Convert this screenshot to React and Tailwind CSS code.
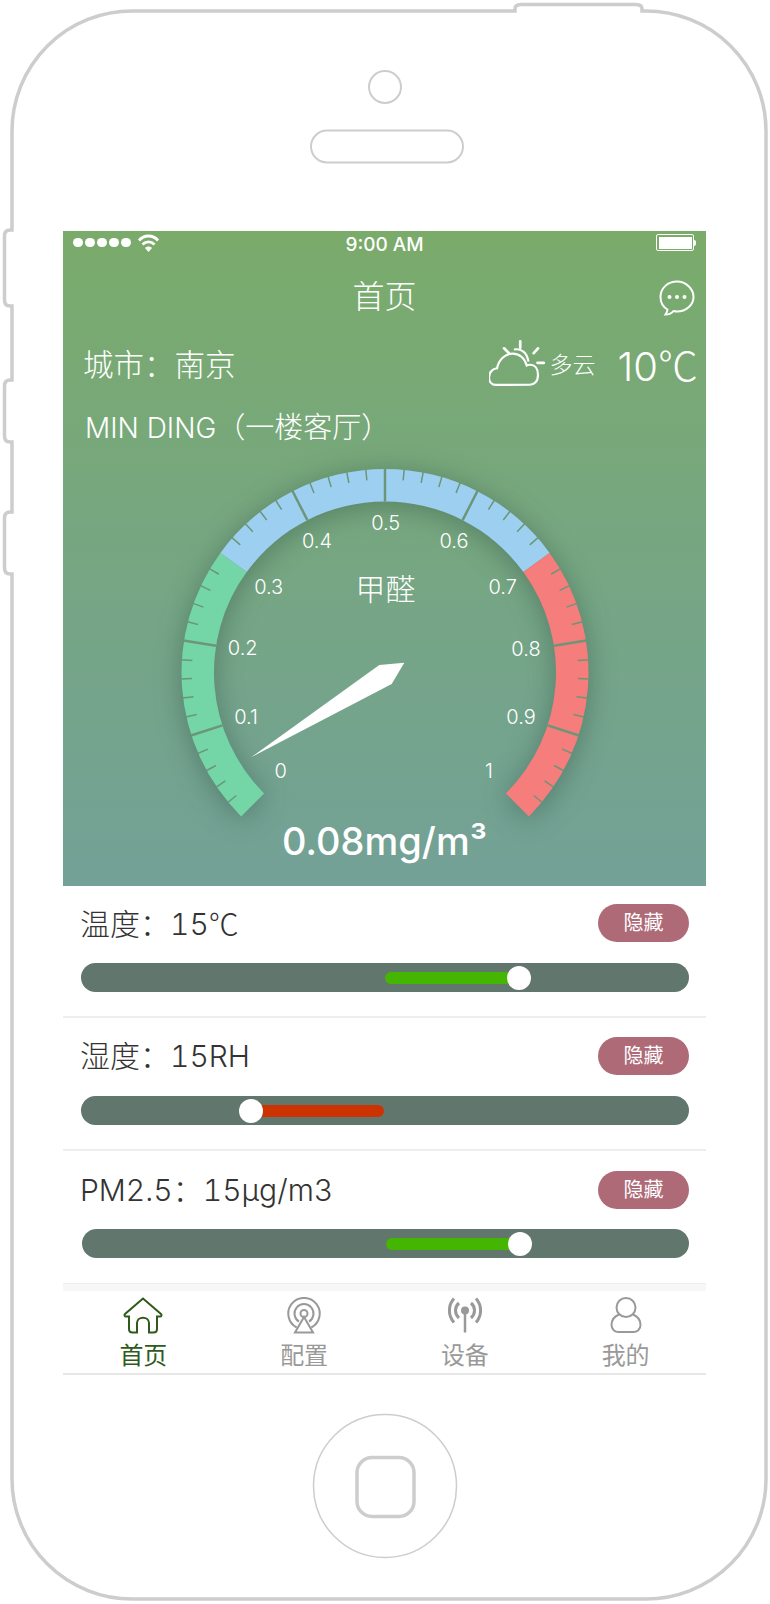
import React from 'react';

const CX = 322;
const CY = 224.5;

const polar = (r, v) => {
    // v goes 0..1 over a 270 degree sweep, starting bottom left
    const a = ((-135 + v * 270) * Math.PI) / 180;
    return [CX + r * Math.sin(a), CY - r * Math.cos(a)];
};

const sector = (from, to) => {
    const R = 203.5;
    const r = 171;
    const [x1, y1] = polar(R, from);
    const [x2, y2] = polar(R, to);
    const [x3, y3] = polar(r, to);
    const [x4, y4] = polar(r, from);
    return `M${x1} ${y1}A${R} ${R} 0 0 1 ${x2} ${y2}L${x3} ${y3}A${r} ${r} 0 0 0 ${x4} ${y4}Z`;
};

const labels = [
    ['0', 217.7, 322.7],
    ['0.1', 183, 268.7],
    ['0.2', 179.7, 199.7],
    ['0.3', 205.7, 138.7],
    ['0.4', 254, 93],
    ['0.5', 322.7, 75],
    ['0.6', 391, 93],
    ['0.7', 439.7, 138.7],
    ['0.8', 463, 200.5],
    ['0.9', 458, 268.7],
    ['1', 426, 322.7],
];

const ticks = Array.from({ length: 51 }, (_, i) => i);

const Gauge = () => (
    <svg className="block overflow-visible" width="643" height="375" viewBox="0 0 643 375">
        <g className="drop-shadow-[0_4px_14px_rgba(30,60,50,0.38)]">
            <path d={sector(0, 0.3)} fill="#74d5a6" />
            <path d={sector(0.3, 0.7)} fill="#9dcff0" />
            <path d={sector(0.7, 1)} fill="#f57d7b" />
        </g>
        {ticks.map((i) => {
            const v = i / 50;
            const major = i % 5 === 0;
            if (i === 0 || i === 50) return null;
            if (major && (i === 15 || i === 35)) return null;
            const [x1, y1] = polar(204, v);
            const [x2, y2] = polar(major ? 171 : 193, v);
            return (
                <line
                    key={i}
                    x1={x1}
                    y1={y1}
                    x2={x2}
                    y2={y2}
                    stroke="#6c9678"
                    strokeWidth={major ? 2.5 : 1.5}
                />
            );
        })}
        {labels.map(([t, x, y]) => (
            <text key={t} x={x} y={y} textAnchor="middle" dominantBaseline="central" fill="#fff" className="text-[20px] font-light">
                {t}
            </text>
        ))}
        <text x="322.500" y="141" textAnchor="middle" dominantBaseline="central" fill="#fff" className="text-[30px] font-light">
            甲醛
        </text>
        <path d="M188 309.3L316.3 217L341.3 214.7L328.7 236Z" fill="#fff" />
    </svg>
);

const Slider = ({ children, className }) => (
    <div className={`flex h-[29px] items-center rounded-full bg-[#61766d] ${className}`}>{children}</div>
);

const HideBtn = () => (
    <div className="flex h-[38px] w-[91px] items-center justify-center rounded-full bg-[#ae6a77] text-[20px] font-normal text-white">
        隐藏
    </div>
);

const Row = ({ label, className, children }) => (
    <div className={className}>
        <div className="flex h-[38px] items-center justify-between">
            <span className="-ml-px text-[30px] leading-none font-light text-[#333] tabular-nums">{label}</span>
            <HideBtn />
        </div>
        {children}
    </div>
);

const Thumb = ({ className }) => <div className={`h-6 w-6 shrink-0 rounded-full bg-white ${className}`} />;

const Celsius = () => <span className="[font-family:'Noto_Sans_CJK_SC',sans-serif]">℃</span>;

const tabs = [
    {
        name: '首页',
        color: 'text-[#2e5a1c]',
        icon: (
            <path d="M20 1.500L2 17c-1 1-.5 2.500 1 2.500h3V32c0 2 1.500 3.500 3.500 3.500H14V26c0-7 12-7 12 0v9.500h4.500c2 0 3.500-1.500 3.500-3.500V19.500h3c1.500 0 2-1.500 1-2.500L20 1.500z" />
        ),
    },
    {
        name: '配置',
        color: 'text-[#999]',
        icon: (
            <>
                <path d="M12.700 30.500A15.700 15.700 0 1 1 27.300 30.500" />
                <path d="M15 24.600A9.500 9.500 0 1 1 25 24.600" />
                <circle cx="20" cy="16.500" r="3.500" />
                <path d="M20 20L11 35.500H29L20 20z" />
            </>
        ),
    },
    {
        name: '设备',
        color: 'text-[#999]',
        icon: (
            <>
                <path d="M9 1.500a18 18 0 0 0 0 24M31 1.500a18 18 0 0 1 0 24" strokeWidth="3" />
                <path d="M14 6a9.800 9.800 0 0 0 0 15M26 6a9.800 9.800 0 0 1 0 15" strokeWidth="3" />
                <circle cx="20" cy="13.500" r="4" fill="currentColor" stroke="none" />
                <path d="M20 14V35.500" strokeWidth="2.500" />
            </>
        ),
    },
    {
        name: '我的',
        color: 'text-[#999]',
        icon: (
            <>
                <circle cx="20" cy="10.500" r="9.500" />
                <path d="M13 17.500C8 19.500 5.500 24 5.500 28c0 4.500 3.500 7 7 7h15c3.500 0 7-2.500 7-7 0-4-2.500-8.500-7.500-10.500" />
            </>
        ),
    },
];

export default function App() {
    return (
        <div className="relative h-[1604px] w-[770px] overflow-hidden bg-white pt-[231px] pl-[63px] [font-family:Inter,'Noto_Sans_CJK_SC',sans-serif]">
            {/* phone outline */}
            <svg className="absolute top-0 left-0" width="770" height="1604" viewBox="0 0 770 1604" fill="none" stroke="#cdcdcd">
                <path
                    strokeWidth="3.500"
                    d="M132 11H515V9Q515 4.500 521 4.500H636Q642 4.500 642 9V11H646A120 120 0 0 1 766 131V1479A120 120 0 0 1 646 1599H132A120 120 0 0 1 12 1479V574H10Q4.500 574 4.500 568V518Q4.500 512 10 512H12V442H10Q4.500 442 4.500 436V386Q4.500 380 10 380H12V306H10Q4.500 306 4.500 300V236Q4.500 230 10 230H12V131A120 120 0 0 1 132 11Z"
                />
                <circle cx="385" cy="87" r="16" strokeWidth="2" />
                <rect x="311" y="130.500" width="152" height="32" rx="16" strokeWidth="2" />
                <circle cx="385" cy="1486" r="71.500" strokeWidth="1.500" />
                <rect x="357" y="1457.500" width="57" height="59" rx="15" strokeWidth="3.500" />
            </svg>

            <div className="relative flex w-[643px] flex-col">
                {/* green top part */}
                <div className="flex h-[655px] flex-col bg-linear-to-b from-[#7aab6a] to-[#73a197] text-white">
                    <div className="grid h-[23px] grid-cols-3 items-center pr-[10px] pl-[10px]">
                        <div className="flex items-center gap-[2.500px]">
                            <div className="h-[9.500px] w-[9.500px] rounded-full bg-white" />
                            <div className="h-[9.500px] w-[9.500px] rounded-full bg-white" />
                            <div className="h-[9.500px] w-[9.500px] rounded-full bg-white" />
                            <div className="h-[9.500px] w-[9.500px] rounded-full bg-white" />
                            <div className="h-[9.500px] w-[9.500px] rounded-full bg-white" />
                            <svg className="ml-[4px]" width="23" height="18" viewBox="0 0 22 18" fill="none" stroke="#fff" strokeWidth="2.800">
                                <path d="M1.500 6.500C6.500 .5 15.500 .5 20.500 6.500M5 10.500c3.500-3.500 8.500-3.500 12 0" />
                                <path d="M11 18L7.500 14c2-2 5-2 7 0z" fill="#fff" stroke="none" />
                            </svg>
                        </div>
                        <span className="translate-y-[2px] text-center text-[19px] leading-none font-medium">9:00 AM</span>
                        <div className="flex items-center justify-end">
                            <div className="h-[17px] w-[38px] rounded-[2px] border border-white bg-white bg-clip-content p-[1.500px]" />
                            <div className="h-[6px] w-[2px] rounded-r-full bg-white" />
                        </div>
                    </div>

                    <div className="relative mt-[18px] flex h-[50px] items-center justify-center text-[32px] font-light">
                        首页
                        <svg className="absolute top-[8px] right-[11px]" width="36" height="36" viewBox="0 0 36 36" fill="none" stroke="#fff" strokeWidth="2">
                            <path d="M18 1.500C9 1.500 1.500 8 1.500 17c0 6 3.500 10.500 7 12.500 0 1.500-1 3.500-2 5 3 0 6.500-1.500 8-3.500 1 .2 2.500.5 3.500.5 9 0 16.500-6.500 16.500-14.500S27 1.500 18 1.500z" />
                            <circle cx="10.500" cy="17" r="2" fill="#fff" stroke="none" />
                            <circle cx="18" cy="17" r="2" fill="#fff" stroke="none" />
                            <circle cx="25.500" cy="17" r="2" fill="#fff" stroke="none" />
                        </svg>
                    </div>

                    <div className="mt-[18px] flex h-[50px] items-center justify-between pr-[8px] pl-[20px]">
                        <span className="text-[30.500px] font-light">城市：南京</span>
                        <div className="flex items-center">
                            <svg width="56" height="54" viewBox="2 0 52 50" fill="none" stroke="#fff" strokeWidth="2" strokeLinecap="round">
                                <path d="M8.500 43.500C4.500 43.500 2 40.500 2 36.500 2 32 5 28.500 9.500 28 11 20 17 14.500 24 14.500c6.500 0 11.500 4.500 13 11 1-.5 2-.7 3-.7 4.500 0 7.500 3.500 7.500 9.500s-3.500 9-7.500 9z" />
                                <path d="M26 10.500c6-1 11 3 12.500 10.500" />
                                <path d="M31 3V9M16 9.500l4.500 4.500M47.500 9.500L43.500 14M47 23H53" strokeWidth="2.500" />
                            </svg>
                            <span className="ml-[5px] text-[23px] font-light">多云</span>
                            <span className="ml-[22px] text-[40px] leading-none font-light">
                                10
                                <Celsius />
                            </span>
                        </div>
                    </div>

                    <div className="mt-[18px] flex h-[40px] items-center pl-[22px] text-[28px] font-light">
                        MIN DING<span className="text-[29px]">（一楼客厅）</span>
                    </div>

                    <Gauge />
                    <div className="-mt-[4px] text-center text-[38px] leading-[45px] font-medium">0.08mg/m³</div>
                </div>

                {/* readings */}
                <Row
                    label={
                        <>
                            温度：15
                            <Celsius />
                        </>
                    }
                    className="border-b-2 border-[#eeeeee] pt-[18px] pr-[17px] pb-[24px] pl-[18px]"
                >
                    <Slider className="mt-[21px] pl-[304px]">
                        <div className="h-3 w-[134px] rounded-full bg-[#44b500]" />
                        <Thumb className="-ml-[12px]" />
                    </Slider>
                </Row>
                <Row label="湿度：15RH" className="border-b-2 border-[#eeeeee] pt-[19px] pr-[17px] pb-[24px] pl-[18px]">
                    <Slider className="mt-[21px] pl-[158px]">
                        <Thumb className="relative" />
                        <div className="-ml-[9px] h-3 w-[130px] rounded-full bg-[#cc3300]" />
                    </Slider>
                </Row>
                <Row label="PM2.5：15μg/m3" className="border-b border-[#eeeeee] pt-[20px] pr-[17px] pb-[25px] pl-[18px]">
                    <Slider className="mt-[20px] ml-px pl-[304px]">
                        <div className="h-3 w-[134px] rounded-full bg-[#44b500]" />
                        <Thumb className="-ml-[12px]" />
                    </Slider>
                </Row>
                <div className="h-[7px] bg-[#f7f7f7]" />

                {/* tab bar */}
                <div className="grid h-[84px] grid-cols-4 border-b-2 border-[#e6e6e6]">
                    {tabs.map((tab) => (
                        <div key={tab.name} className={`flex flex-col items-center pt-[6px] ${tab.color}`}>
                            <svg width="40" height="37" viewBox="0 0 40 37" fill="none" stroke="currentColor" strokeWidth="2">
                                {tab.icon}
                            </svg>
                            <span className="mt-[7px] text-[24px] leading-[30px] font-normal">{tab.name}</span>
                        </div>
                    ))}
                </div>
            </div>
        </div>
    );
}
